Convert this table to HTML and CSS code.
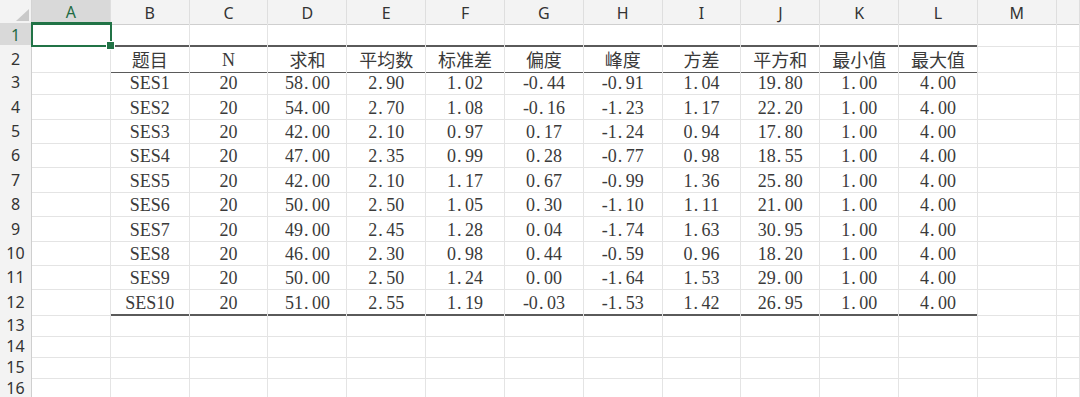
FILE: index.html
```html
<!DOCTYPE html>
<html lang="zh">
<head>
<meta charset="utf-8">
<title>描述统计</title>
<link rel="stylesheet" href="styles.css">
</head>
<body>
<div class="sheet">
  <div class="row hdr">
    <div class="corner"><svg width="32" height="23" viewBox="0 0 32 23"><polygon points="29,9 29,21 16,21" fill="#c9c9c9"/></svg></div>
    <div class="ch on">A</div><div class="ch">B</div><div class="ch">C</div><div class="ch">D</div><div class="ch">E</div><div class="ch">F</div><div class="ch">G</div><div class="ch">H</div><div class="ch">I</div><div class="ch">J</div><div class="ch">K</div><div class="ch">L</div><div class="ch">M</div><div class="ch"></div>
  </div>

  <div class="row r1">
    <div class="rh on">1</div>
    <div class="c sel"></div><div class="c tt"></div><div class="c tt"></div><div class="c tt"></div><div class="c tt"></div><div class="c tt"></div><div class="c tt"></div><div class="c tt"></div><div class="c tt"></div><div class="c tt"></div><div class="c tt"></div><div class="c tt"></div><div class="c"></div><div class="c"></div>
  </div>

  <div class="row">
    <div class="rh">2</div>
    <div class="c"></div><div class="c th">题目</div><div class="c th lat">N</div><div class="c th">求和</div><div class="c th">平均数</div><div class="c th">标准差</div><div class="c th">偏度</div><div class="c th">峰度</div><div class="c th">方差</div><div class="c th">平方和</div><div class="c th">最小值</div><div class="c th">最大值</div><div class="c"></div><div class="c"></div>
  </div>

  <div class="row data">
    <div class="rh">3</div>
    <div class="c"></div><div class="c">SES1</div><div class="c">20</div><div class="c">58<span class="p">.</span>00</div><div class="c">2<span class="p">.</span>90</div><div class="c">1<span class="p">.</span>02</div><div class="c">-0<span class="p">.</span>44</div><div class="c">-0<span class="p">.</span>91</div><div class="c">1<span class="p">.</span>04</div><div class="c">19<span class="p">.</span>80</div><div class="c">1<span class="p">.</span>00</div><div class="c">4<span class="p">.</span>00</div><div class="c"></div><div class="c"></div>
  </div>

  <div class="row data">
    <div class="rh">4</div>
    <div class="c"></div><div class="c">SES2</div><div class="c">20</div><div class="c">54<span class="p">.</span>00</div><div class="c">2<span class="p">.</span>70</div><div class="c">1<span class="p">.</span>08</div><div class="c">-0<span class="p">.</span>16</div><div class="c">-1<span class="p">.</span>23</div><div class="c">1<span class="p">.</span>17</div><div class="c">22<span class="p">.</span>20</div><div class="c">1<span class="p">.</span>00</div><div class="c">4<span class="p">.</span>00</div><div class="c"></div><div class="c"></div>
  </div>

  <div class="row data">
    <div class="rh">5</div>
    <div class="c"></div><div class="c">SES3</div><div class="c">20</div><div class="c">42<span class="p">.</span>00</div><div class="c">2<span class="p">.</span>10</div><div class="c">0<span class="p">.</span>97</div><div class="c">0<span class="p">.</span>17</div><div class="c">-1<span class="p">.</span>24</div><div class="c">0<span class="p">.</span>94</div><div class="c">17<span class="p">.</span>80</div><div class="c">1<span class="p">.</span>00</div><div class="c">4<span class="p">.</span>00</div><div class="c"></div><div class="c"></div>
  </div>

  <div class="row data">
    <div class="rh">6</div>
    <div class="c"></div><div class="c">SES4</div><div class="c">20</div><div class="c">47<span class="p">.</span>00</div><div class="c">2<span class="p">.</span>35</div><div class="c">0<span class="p">.</span>99</div><div class="c">0<span class="p">.</span>28</div><div class="c">-0<span class="p">.</span>77</div><div class="c">0<span class="p">.</span>98</div><div class="c">18<span class="p">.</span>55</div><div class="c">1<span class="p">.</span>00</div><div class="c">4<span class="p">.</span>00</div><div class="c"></div><div class="c"></div>
  </div>

  <div class="row data">
    <div class="rh">7</div>
    <div class="c"></div><div class="c">SES5</div><div class="c">20</div><div class="c">42<span class="p">.</span>00</div><div class="c">2<span class="p">.</span>10</div><div class="c">1<span class="p">.</span>17</div><div class="c">0<span class="p">.</span>67</div><div class="c">-0<span class="p">.</span>99</div><div class="c">1<span class="p">.</span>36</div><div class="c">25<span class="p">.</span>80</div><div class="c">1<span class="p">.</span>00</div><div class="c">4<span class="p">.</span>00</div><div class="c"></div><div class="c"></div>
  </div>

  <div class="row data">
    <div class="rh">8</div>
    <div class="c"></div><div class="c">SES6</div><div class="c">20</div><div class="c">50<span class="p">.</span>00</div><div class="c">2<span class="p">.</span>50</div><div class="c">1<span class="p">.</span>05</div><div class="c">0<span class="p">.</span>30</div><div class="c">-1<span class="p">.</span>10</div><div class="c">1<span class="p">.</span>11</div><div class="c">21<span class="p">.</span>00</div><div class="c">1<span class="p">.</span>00</div><div class="c">4<span class="p">.</span>00</div><div class="c"></div><div class="c"></div>
  </div>

  <div class="row data">
    <div class="rh">9</div>
    <div class="c"></div><div class="c">SES7</div><div class="c">20</div><div class="c">49<span class="p">.</span>00</div><div class="c">2<span class="p">.</span>45</div><div class="c">1<span class="p">.</span>28</div><div class="c">0<span class="p">.</span>04</div><div class="c">-1<span class="p">.</span>74</div><div class="c">1<span class="p">.</span>63</div><div class="c">30<span class="p">.</span>95</div><div class="c">1<span class="p">.</span>00</div><div class="c">4<span class="p">.</span>00</div><div class="c"></div><div class="c"></div>
  </div>

  <div class="row data">
    <div class="rh">10</div>
    <div class="c"></div><div class="c">SES8</div><div class="c">20</div><div class="c">46<span class="p">.</span>00</div><div class="c">2<span class="p">.</span>30</div><div class="c">0<span class="p">.</span>98</div><div class="c">0<span class="p">.</span>44</div><div class="c">-0<span class="p">.</span>59</div><div class="c">0<span class="p">.</span>96</div><div class="c">18<span class="p">.</span>20</div><div class="c">1<span class="p">.</span>00</div><div class="c">4<span class="p">.</span>00</div><div class="c"></div><div class="c"></div>
  </div>

  <div class="row data">
    <div class="rh">11</div>
    <div class="c"></div><div class="c">SES9</div><div class="c">20</div><div class="c">50<span class="p">.</span>00</div><div class="c">2<span class="p">.</span>50</div><div class="c">1<span class="p">.</span>24</div><div class="c">0<span class="p">.</span>00</div><div class="c">-1<span class="p">.</span>64</div><div class="c">1<span class="p">.</span>53</div><div class="c">29<span class="p">.</span>00</div><div class="c">1<span class="p">.</span>00</div><div class="c">4<span class="p">.</span>00</div><div class="c"></div><div class="c"></div>
  </div>

  <div class="row data">
    <div class="rh">12</div>
    <div class="c"></div><div class="c tb">SES10</div><div class="c tb">20</div><div class="c tb">51<span class="p">.</span>00</div><div class="c tb">2<span class="p">.</span>55</div><div class="c tb">1<span class="p">.</span>19</div><div class="c tb">-0<span class="p">.</span>03</div><div class="c tb">-1<span class="p">.</span>53</div><div class="c tb">1<span class="p">.</span>42</div><div class="c tb">26<span class="p">.</span>95</div><div class="c tb">1<span class="p">.</span>00</div><div class="c tb">4<span class="p">.</span>00</div><div class="c"></div><div class="c"></div>
  </div>

  <div class="row short">
    <div class="rh">13</div>
    <div class="c"></div><div class="c"></div><div class="c"></div><div class="c"></div><div class="c"></div><div class="c"></div><div class="c"></div><div class="c"></div><div class="c"></div><div class="c"></div><div class="c"></div><div class="c"></div><div class="c"></div><div class="c"></div>
  </div>
  <div class="row short">
    <div class="rh">14</div>
    <div class="c"></div><div class="c"></div><div class="c"></div><div class="c"></div><div class="c"></div><div class="c"></div><div class="c"></div><div class="c"></div><div class="c"></div><div class="c"></div><div class="c"></div><div class="c"></div><div class="c"></div><div class="c"></div>
  </div>
  <div class="row short">
    <div class="rh">15</div>
    <div class="c"></div><div class="c"></div><div class="c"></div><div class="c"></div><div class="c"></div><div class="c"></div><div class="c"></div><div class="c"></div><div class="c"></div><div class="c"></div><div class="c"></div><div class="c"></div><div class="c"></div><div class="c"></div>
  </div>
  <div class="row short">
    <div class="rh">16</div>
    <div class="c"></div><div class="c"></div><div class="c"></div><div class="c"></div><div class="c"></div><div class="c"></div><div class="c"></div><div class="c"></div><div class="c"></div><div class="c"></div><div class="c"></div><div class="c"></div><div class="c"></div><div class="c"></div>
  </div>
</div>
</body>
</html>
```

FILE: styles.css
```css
* { box-sizing: border-box; }

body {
  margin: 0;
  background: #ffffff;
  font-family: "Liberation Serif", "Noto Sans CJK SC", serif;
}

.sheet {
  width: 1080px;
  height: 397px;
  overflow: hidden;
}

.row {
  display: grid;
  grid-template-columns: 32px repeat(13, 78.83px) 1fr;
  height: 24.36px;
}

.row.r1 { height: 22px; }
.row.short { height: 21px; }
.row.hdr { height: 23px; }

.corner {
  background: #f3f3f3;
  border-right: 1px solid #d4d4d4;
  border-bottom: 1px solid #cfcfcf;
}
.corner svg { display: block; }

.ch {
  display: flex;
  align-items: center;
  justify-content: center;
  background: #f3f3f3;
  border-right: 1px solid #dedede;
  border-bottom: 1px solid #cfcfcf;
  font-family: "Noto Sans", "Liberation Sans", sans-serif;
  font-size: 16px;
  color: #333333;
  padding-top: 1px;
}
.ch.on {
  background: #d9d9d9;
  color: #1f6b43;
  border-bottom: 2px solid #217346;
}

.rh {
  display: flex;
  align-items: center;
  justify-content: center;
  background: #f3f3f3;
  border-right: 1px solid #cfcfcf;
  border-bottom: 1px solid #e2e2e2;
  font-family: "Noto Sans", "Liberation Sans", sans-serif;
  font-size: 16px;
  color: #333333;
  padding-top: 1px;
}
.rh.on {
  background: #d9d9d9;
  color: #1f6b43;
}

.c {
  display: flex;
  align-items: center;
  justify-content: center;
  border-right: 1px solid #e4e4e4;
  border-bottom: 1px solid #e4e4e4;
  font-size: 18px;
  color: #3a3a3a;
  white-space: nowrap;
  padding-top: 1px;
}

.row.data .c { padding-top: 4px; }
.c.lat { padding-top: 4px; }

.c .p {
  display: inline-block;
  width: 9px;
  text-align: left;
  padding-left: 1px;
}

.c.tt { border-bottom: 2px solid #5a5a5a; }
.c.th { border-bottom: 1px solid #5a5a5a; }
.c.tb { border-bottom: 2px solid #5a5a5a; }

.c.sel { position: relative; }
.c.sel::after {
  content: "";
  position: absolute;
  top: -1px;
  left: -1px;
  right: -2px;
  bottom: -1px;
  border: 2px solid #217346;
  z-index: 2;
}
.c.sel::before {
  content: "";
  position: absolute;
  right: -5px;
  bottom: -4px;
  width: 7px;
  height: 7px;
  background: #217346;
  border: 1px solid #ffffff;
  z-index: 3;
}
```
